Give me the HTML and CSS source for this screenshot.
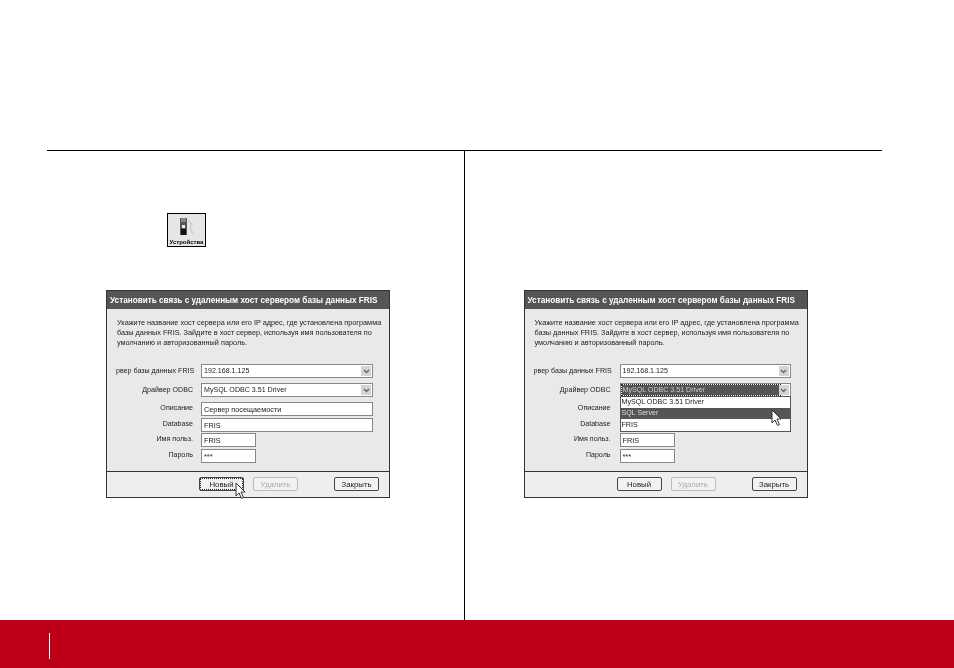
FILE: index.html
```html
<!DOCTYPE html>
<html lang="ru">
<head>
    <meta charset="UTF-8">
    <meta name="viewport" content="width=device-width, initial-scale=1.0">
    <title>Устройства</title>
    <link rel="stylesheet" href="styles.css">
</head>
<body>
    <div class="page">
        <div class="columns">
            <div class="column">
                <div class="top-area">
                    <div class="device-icon">
                        <svg width="20" height="20" viewBox="0 0 20 20">
                            <rect x="3" y="1" width="7" height="17" fill="#555"/>
                            <rect x="4" y="1" width="5" height="4" fill="#888"/>
                            <rect x="5" y="8" width="3" height="3" fill="#eee"/>
                            <rect x="4" y="12" width="5" height="6" fill="#111"/>
                            <path d="M11 4 L15 7 L13 11 L16 17" stroke="#ccc" stroke-width="1.5" fill="none"/>
                        </svg>
                        <span class="device-label">Устройства</span>
                    </div>
                </div>
                <div class="dialog">
                    <div class="dialog-title">Установить связь с удаленным хост сервером базы данных FRIS</div>
                    <div class="dialog-body">
                        <p class="intro">Укажите название хост сервера или его IP адрес, где установлена программа<br>базы данных FRIS. Зайдите в хост сервер, используя имя пользователя по<br>умолчанию и авторизованный пароль.</p>
                        <div class="form">
                            <label class="row-select">рвер базы данных FRIS</label>
                            <div class="field select"><span>192.168.1.125</span><i class="arrow"><svg width="7" height="5" viewBox="0 0 7 5"><path d="M1 1 L3.5 3.5 L6 1" stroke="#666" stroke-width="1.4" fill="none"/></svg></i></div>
                            <label class="row-select">Драйвер ODBC</label>
                            <div class="field select"><span>MySQL ODBC 3.51 Driver</span><i class="arrow"><svg width="7" height="5" viewBox="0 0 7 5"><path d="M1 1 L3.5 3.5 L6 1" stroke="#666" stroke-width="1.4" fill="none"/></svg></i></div>
                            <label>Описание</label>
                            <div class="field"><span>Сервер посещаемости</span></div>
                            <label>Database</label>
                            <div class="field"><span>FRIS</span></div>
                            <label>Имя польз.</label>
                            <div class="field short"><span>FRIS</span></div>
                            <label>Пароль</label>
                            <div class="field short"><span>***</span></div>
                        </div>
                    </div>
                    <div class="dialog-buttons">
                        <button class="btn btn-new focused">Новый</button>
                        <button class="btn btn-delete" disabled>Удалить</button>
                        <button class="btn btn-close">Закрыть</button>
                    </div>
                    <svg class="cursor cursor-new" width="12" height="18" viewBox="0 0 12 18"><path d="M1 1 L1 14 L4 11 L6.5 16.5 L8.5 15.5 L6 10 L10 10 Z" fill="#fff" stroke="#333"/></svg>
                </div>
            </div>
            <div class="column column-right">
                <div class="top-area"></div>
                <div class="dialog dialog-open">
                    <div class="dialog-title">Установить связь с удаленным хост сервером базы данных FRIS</div>
                    <div class="dialog-body">
                        <p class="intro">Укажите название хост сервера или его IP адрес, где установлена программа<br>базы данных FRIS. Зайдите в хост сервер, используя имя пользователя по<br>умолчанию и авторизованный пароль.</p>
                        <div class="form">
                            <label class="row-select">рвер базы данных FRIS</label>
                            <div class="field select"><span>192.168.1.125</span><i class="arrow"><svg width="7" height="5" viewBox="0 0 7 5"><path d="M1 1 L3.5 3.5 L6 1" stroke="#666" stroke-width="1.4" fill="none"/></svg></i></div>
                            <label class="row-select">Драйвер ODBC</label>
                            <div class="field select">
                                <span class="selected">MySQL ODBC 3.51 Driver</span><i class="arrow"><svg width="7" height="5" viewBox="0 0 7 5"><path d="M1 1 L3.5 3.5 L6 1" stroke="#666" stroke-width="1.4" fill="none"/></svg></i>
                                <ul class="dropdown">
                                    <li>MySQL ODBC 3.51 Driver</li>
                                    <li class="hover">SQL Server</li>
                                    <li>FRIS</li>
                                </ul>
                            </div>
                            <label>Описание</label>
                            <div class="field"></div>
                            <label>Database</label>
                            <div class="field"></div>
                            <label>Имя польз.</label>
                            <div class="field short"><span>FRIS</span></div>
                            <label>Пароль</label>
                            <div class="field short"><span>***</span></div>
                        </div>
                    </div>
                    <div class="dialog-buttons">
                        <button class="btn btn-new">Новый</button>
                        <button class="btn btn-delete" disabled>Удалить</button>
                        <button class="btn btn-close">Закрыть</button>
                    </div>
                    <svg class="cursor cursor-list" width="12" height="18" viewBox="0 0 12 18"><path d="M1 1 L1 14 L4 11 L6.5 16.5 L8.5 15.5 L6 10 L10 10 Z" fill="#fff" stroke="#333"/></svg>
                </div>
            </div>
        </div>
        <div class="footer"><div class="footer-tick"></div></div>
    </div>
</body>
</html>
```

FILE: styles.css
```css
html, body {
    margin: 0;
    padding: 0;
    background: #fff;
}
.page {
    display: flex;
    flex-direction: column;
    height: 668px;
    overflow: hidden;
    font-family: "Liberation Sans", Arial, sans-serif;
}
.columns {
    display: flex;
    height: 469px;
    margin: 150px 72px 0 47px;
    border-top: 1px solid #000;
}
.column {
    width: 417px;
}
.column-right {
    width: 418px;
    border-left: 1px solid #000;
}
.top-area {
    height: 139px;
    display: flex;
    align-items: flex-start;
}
.device-icon {
    display: flex;
    flex-direction: column;
    align-items: center;
    box-sizing: border-box;
    width: 39px;
    height: 34px;
    margin: 62px 0 0 120px;
    padding-top: 3px;
    border: 1px solid #000;
    background: #e6e6e6;
    filter: blur(0.3px);
}
.device-icon svg {
    display: block;
    height: 20px;
}
.device-label {
    margin-top: 2px;
    font-size: 6px;
    font-weight: bold;
    line-height: 7px;
    white-space: nowrap;
}
.dialog {
    position: relative;
    box-sizing: border-box;
    width: 284px;
    height: 208px;
    margin-left: 59px;
    border: 1px solid #333;
    background: #e9e9e9;
    display: flex;
    flex-direction: column;
    filter: blur(0.4px);
}
.dialog-title {
    height: 18px;
    line-height: 19px;
    padding-left: 3px;
    background: #555;
    color: #fff;
    font-size: 8.2px;
    font-weight: bold;
    white-space: nowrap;
}
.dialog-body {
    flex: 1;
    padding: 9px 16px 0 10px;
    color: #222;
    font-size: 7.3px;
}
.intro {
    margin: 0 0 16px;
    line-height: 10px;
    white-space: nowrap;
}
.form {
    display: grid;
    grid-template-columns: 78px 1fr;
    column-gap: 7px;
    align-items: center;
    margin-left: -1px;
    font-size: 7.1px;
}
.dialog-open .form {
    column-gap: 8px;
}
.form label {
    padding-right: 1px;
    text-align: right;
    white-space: nowrap;
    height: 15.5px;
    line-height: 13px;
}
.form label.row-select {
    height: 19px;
    line-height: 14px;
}
.field {
    position: relative;
    box-sizing: border-box;
    height: 14px;
    margin-bottom: 1.5px;
    line-height: 14px;
    padding-left: 2px;
    background: #fff;
    border: 1px solid #888;
    font-size: 7.3px;
    white-space: nowrap;
}
.field.short {
    width: 55px;
}
.field.select {
    height: 14px;
    margin-bottom: 5px;
    line-height: 13px;
    font-size: 7.1px;
}
.arrow {
    position: absolute;
    right: 1px;
    top: 1px;
    width: 10px;
    height: 10px;
    background: #d4d4d4;
    display: flex;
    align-items: center;
    justify-content: center;
}
.selected {
    display: inline-block;
    width: 158px;
    margin-left: -1px;
    padding-left: 1px;
    box-sizing: border-box;
    height: 10px;
    line-height: 10px;
    background: #555;
    color: #ccc;
    outline: 1px dotted #222;
}
.dropdown {
    position: absolute;
    z-index: 2;
    left: -1px;
    right: -1px;
    top: 12px;
    margin: 0;
    padding: 0;
    list-style: none;
    background: #fff;
    border: 1px solid #555;
    font-size: 7.1px;
}
.dropdown li {
    height: 11px;
    line-height: 11px;
    padding-left: 1px;
}
.dropdown li.hover {
    background: #555;
    color: #ddd;
}
.dropdown li:last-child {
    height: 12px;
    line-height: 13px;
}
.dialog-buttons {
    display: flex;
    box-sizing: border-box;
    height: 26px;
    padding: 5px 0 0 92px;
    border-top: 1px solid #333;
    background: #eee;
}
.btn {
    box-sizing: border-box;
    width: 45px;
    height: 14px;
    padding: 0;
    font-family: inherit;
    font-size: 7.8px;
    color: #222;
    background: #f2f2f2;
    border: 1px solid #444;
    border-radius: 2px;
}
.btn.focused {
    outline: 1px dotted #222;
    outline-offset: -2px;
}
.btn-delete {
    margin-left: 9px;
    color: #aaa;
    border-color: #bbb;
}
.btn-close {
    margin-left: 36px;
}
.cursor {
    position: absolute;
    z-index: 3;
}
.cursor-new {
    left: 128px;
    top: 191px;
}
.cursor-list {
    left: 246px;
    top: 118px;
}
.footer {
    flex: 1;
    background: #bd0017;
    padding: 13px 0 0 49px;
}
.footer-tick {
    width: 1px;
    height: 26px;
    background: #fff;
}
```
